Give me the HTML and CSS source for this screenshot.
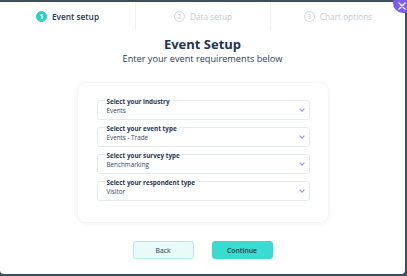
FILE: index.html
```html
<!DOCTYPE html>
<html>
<head>
<meta charset="utf-8">
<link rel="stylesheet" href="styles.css">
</head>
<body>
<div class="modal">
  <div class="tabs">
    <div class="tab active"><span class="num">1</span><span class="tab-label">Event setup</span></div>
    <div class="tab"><span class="num">2</span><span class="tab-label">Data setup</span></div>
    <div class="tab"><span class="num">3</span><span class="tab-label">Chart options</span></div>
  </div>
  <div class="main">
    <h1 class="title">Event Setup</h1>
    <p class="subtitle">Enter your event requirements below</p>
    <div class="card">
      <div class="field">
        <div class="field-text"><span class="label">Select your industry</span><span class="value">Events</span></div>
        <svg class="chev" width="6" height="4" viewBox="0 0 6 4"><path d="M0.6 0.7 L3 3.1 L5.4 0.7" fill="none" stroke="#a98cf6" stroke-width="1.2"/></svg>
      </div>
      <div class="field">
        <div class="field-text"><span class="label">Select your event type</span><span class="value">Events - Trade</span></div>
        <svg class="chev" width="6" height="4" viewBox="0 0 6 4"><path d="M0.6 0.7 L3 3.1 L5.4 0.7" fill="none" stroke="#a98cf6" stroke-width="1.2"/></svg>
      </div>
      <div class="field">
        <div class="field-text"><span class="label">Select your survey type</span><span class="value">Benchmarking</span></div>
        <svg class="chev" width="6" height="4" viewBox="0 0 6 4"><path d="M0.6 0.7 L3 3.1 L5.4 0.7" fill="none" stroke="#a98cf6" stroke-width="1.2"/></svg>
      </div>
      <div class="field">
        <div class="field-text"><span class="label">Select your respondent type</span><span class="value">Visitor</span></div>
        <svg class="chev" width="6" height="4" viewBox="0 0 6 4"><path d="M0.6 0.7 L3 3.1 L5.4 0.7" fill="none" stroke="#a98cf6" stroke-width="1.2"/></svg>
      </div>
    </div>
    <div class="actions">
      <button class="btn back">Back</button>
      <button class="btn continue">Continue</button>
    </div>
  </div>
  <button class="close" aria-label="Close">
    <svg width="8" height="8" viewBox="0 0 8 8"><path d="M1 1 L7 7 M7 1 L1 7" stroke="#fff" stroke-width="1.4" stroke-linecap="round"/></svg>
  </button>
</div>
</body>
</html>
```

FILE: styles.css
```css
html, body {
  margin: 0;
  padding: 0;
}
body {
  background: #3b4f63;
  width: 407px;
  height: 276px;
  overflow: hidden;
  font-family: "Open Sans", "Liberation Sans", sans-serif;
  color: #1f3650;
}
.modal {
  position: relative;
  margin-top: 2px;
  width: 405px;
  height: 272px;
  background: #ffffff;
  border-radius: 0 4px 4px 4px;
}
.tabs {
  display: grid;
  grid-template-columns: 135px 135px 135px;
  height: 28px;
}
.tab {
  display: flex;
  align-items: center;
  justify-content: center;
  gap: 5px;
  color: #c3c9cf;
  font-size: 8.3px;
}
.tab + .tab {
  border-left: 1px solid #f0f2f4;
}
.num {
  width: 9px;
  height: 9px;
  border-radius: 50%;
  border: 1px solid #cfd4d9;
  display: flex;
  align-items: center;
  justify-content: center;
  font-size: 7px;
  line-height: 1;
  box-sizing: content-box;
}
.tab.active {
  color: #1f3650;
}
.tab.active .tab-label {
  font-weight: 600;
}
.tab.active .num {
  background: #27d2c2;
  border-color: #27d2c2;
  color: #ffffff;
  font-weight: 700;
}
.main {
  display: flex;
  flex-direction: column;
  align-items: center;
}
.title {
  margin: 7px 0 0;
  font-size: 13px;
  line-height: 15px;
  font-weight: 700;
  color: #1e3553;
}
.subtitle {
  margin: 1px 0 0;
  font-size: 9.2px;
  line-height: 12px;
  color: #2a3e55;
}
.card {
  margin-top: 17px;
  width: 252px;
  height: 141px;
  box-sizing: border-box;
  padding: 17px 18px 0 19px;
  border-radius: 9px;
  border: 1px solid #f3f5f7;
  box-shadow: 0 1px 4px rgba(40, 60, 90, 0.06);
  display: flex;
  flex-direction: column;
  gap: 7px;
}
.field {
  height: 20px;
  box-sizing: border-box;
  border: 1px solid #e4ebef;
  border-radius: 3px;
  display: flex;
  align-items: center;
  justify-content: space-between;
  padding: 0 4px 0 7px;
}
.field-text {
  align-self: flex-start;
  display: flex;
  flex-direction: column;
  align-items: flex-start;
}
.label {
  margin-top: -3px;
  padding: 0 2px;
  background: #ffffff;
  font-size: 6.3px;
  line-height: 7px;
  font-weight: 700;
  color: #1f3650;
}
.value {
  margin-top: 2px;
  padding-left: 2px;
  font-size: 6.3px;
  line-height: 7px;
  color: #33465b;
}
.chev {
  display: block;
}
.actions {
  margin-top: 18px;
  display: flex;
  gap: 18px;
}
.btn {
  width: 61px;
  height: 18px;
  border-radius: 3px;
  font-family: "Open Sans", "Liberation Sans", sans-serif;
  font-size: 6.8px;
  padding: 0;
  color: #22374f;
}
.back {
  background: #e8fbf9;
  border: 1px solid #aeeee8;
}
.continue {
  background: #3adccf;
  border: 1px solid #3adccf;
  font-weight: 600;
}
.close {
  position: absolute;
  right: -8px;
  top: -9px;
  width: 20px;
  height: 20px;
  border-radius: 50%;
  border: none;
  background: #7c5cf2;
  padding: 0;
  display: flex;
  align-items: center;
  justify-content: center;
}
.close svg {
  margin-top: 6px;
  margin-right: 3px;
}
```
